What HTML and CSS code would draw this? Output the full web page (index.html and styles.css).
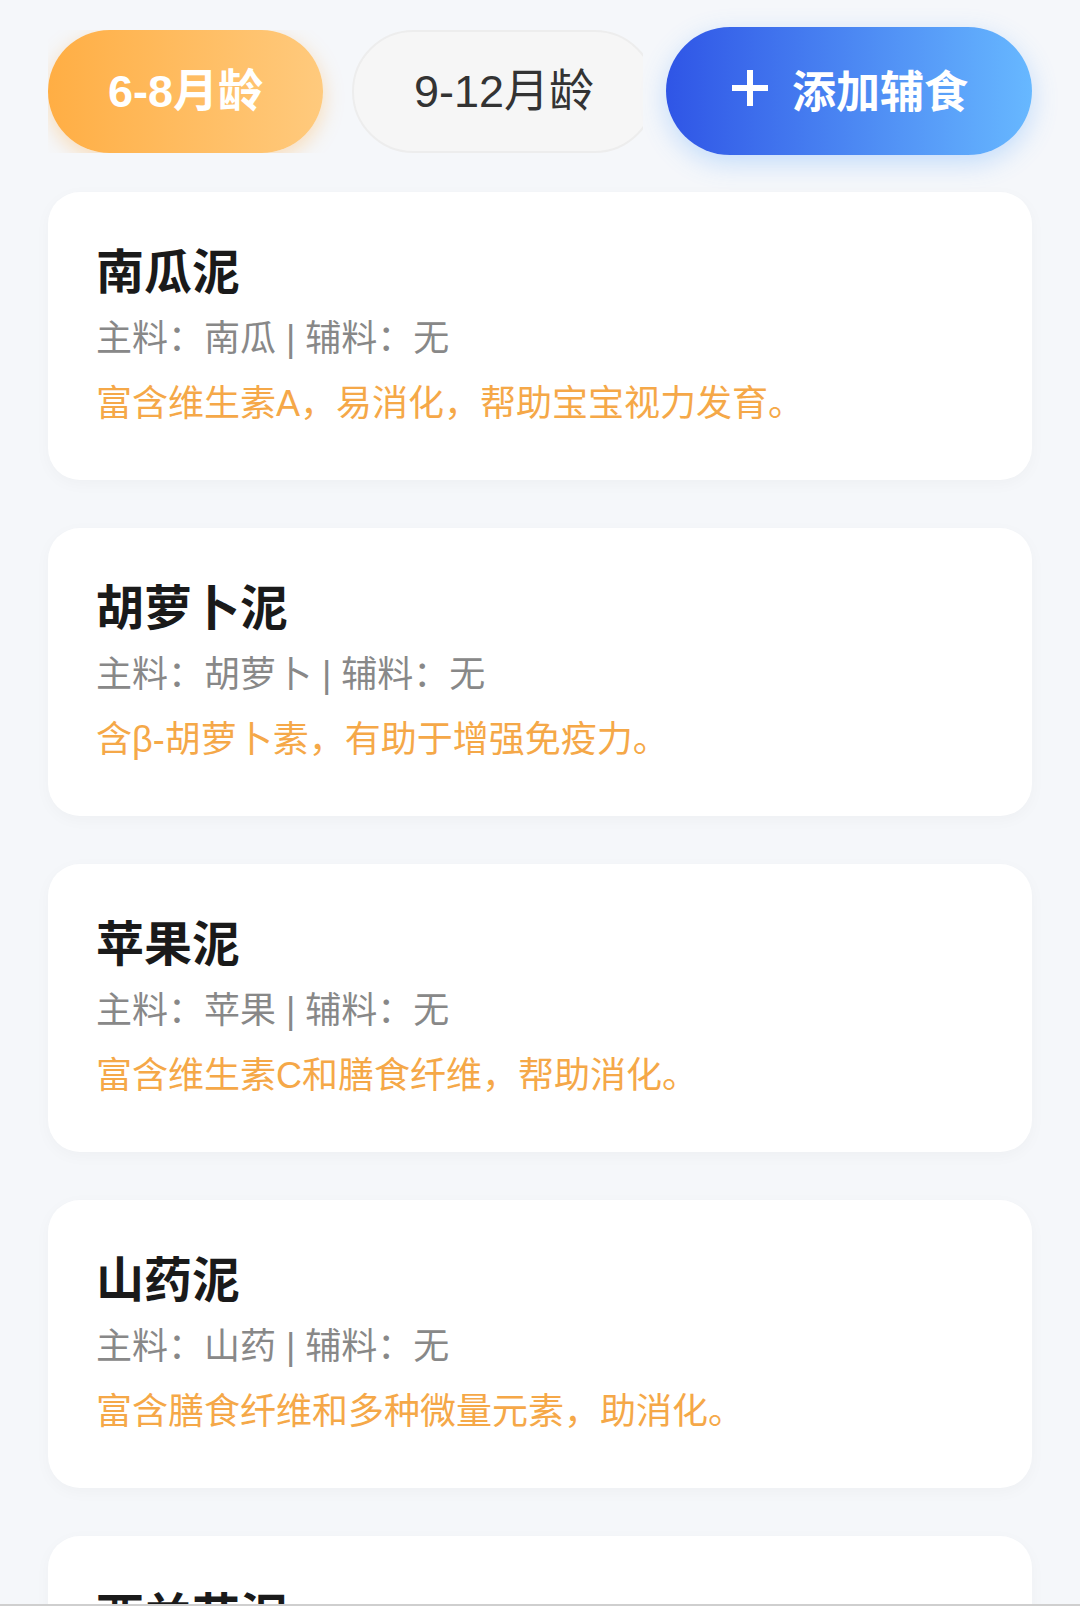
FILE: index.html
```html
<!DOCTYPE html>
<html lang="zh-CN">
<head>
    <meta charset="UTF-8">
    <title>辅食推荐</title>
    <link rel="stylesheet" href="styles.css">
</head>
<body>
    <div class="header">
        <div class="tabs">
            <div class="tab active">6-8月龄</div>
            <div class="tab">9-12月龄</div>
        </div>
        <button class="add-btn">
            <svg class="plus" width="40" height="40" viewBox="0 0 40 40">
                <path d="M20 2 V38 M2 20 H38" stroke="#fff" stroke-width="6" fill="none"/>
            </svg>
            <span>添加辅食</span>
        </button>
    </div>

    <div class="list">
        <div class="card">
            <div class="title">南瓜泥</div>
            <div class="meta">主料：南瓜 | 辅料：无</div>
            <div class="desc">富含维生素A，易消化，帮助宝宝视力发育。</div>
        </div>
        <div class="card">
            <div class="title">胡萝卜泥</div>
            <div class="meta">主料：胡萝卜 | 辅料：无</div>
            <div class="desc">含β-胡萝卜素，有助于增强免疫力。</div>
        </div>
        <div class="card">
            <div class="title">苹果泥</div>
            <div class="meta">主料：苹果 | 辅料：无</div>
            <div class="desc">富含维生素C和膳食纤维，帮助消化。</div>
        </div>
        <div class="card">
            <div class="title">山药泥</div>
            <div class="meta">主料：山药 | 辅料：无</div>
            <div class="desc">富含膳食纤维和多种微量元素，助消化。</div>
        </div>
        <div class="card">
            <div class="title">西兰花泥</div>
            <div class="meta">主料：西兰花 | 辅料：无</div>
            <div class="desc">富含维生素C和叶酸，营养丰富。</div>
        </div>
    </div>

    <div class="bottom-bar"></div>
</body>
</html>
```

FILE: styles.css
```css
body { margin: 0; background: #f5f7fa; font-family: "Liberation Sans", Arial, "Noto Sans CJK SC", sans-serif; }
.header { display: flex; align-items: center; gap: 23px; padding: 27px 48px 0; }
.tabs { flex: 1; display: flex; gap: 29px; overflow: hidden; min-width: 0; }
.tab { flex-shrink: 0; height: 123px; box-sizing: border-box; padding: 0 60px 7px; display: flex; align-items: center; border-radius: 62px; font-size: 45px; color: #333; background: #f6f6f6; border: 2px solid #ededed; }
.tab.active { color: #fff; font-weight: bold; border: none; background: linear-gradient(90deg, #ffae44, #ffca7d); box-shadow: 0 6px 20px rgba(255, 170, 60, 0.35); }
.add-btn { flex-shrink: 0; width: 366px; height: 128px; padding: 0 0 4px; border: none; border-radius: 64px; display: flex; align-items: center; justify-content: center; gap: 22px; color: #fff; font-family: inherit; font-size: 44px; font-weight: bold; background: linear-gradient(90deg, #2f55e6, #67b8ff); box-shadow: 0 8px 26px rgba(80, 160, 255, 0.3); cursor: pointer; }
.plus { margin-top: -2px; }
.list { display: flex; flex-direction: column; gap: 48px; padding: 37px 48px 60px; }
.card { background: #fff; border-radius: 32px; padding: 48px 48px 44px; box-shadow: 0 4px 16px rgba(0, 0, 0, 0.03); }
.title { font-size: 48px; line-height: 66px; font-weight: bold; color: #1a1a1a; }
.meta { font-size: 36px; line-height: 65px; color: #888; }
.desc { font-size: 36px; line-height: 65px; color: #f5a848; }
.bottom-bar { position: fixed; left: 0; right: 0; bottom: 0; height: 7px; background: #fff; border-top: 2px solid #cfcfcf; }
```
